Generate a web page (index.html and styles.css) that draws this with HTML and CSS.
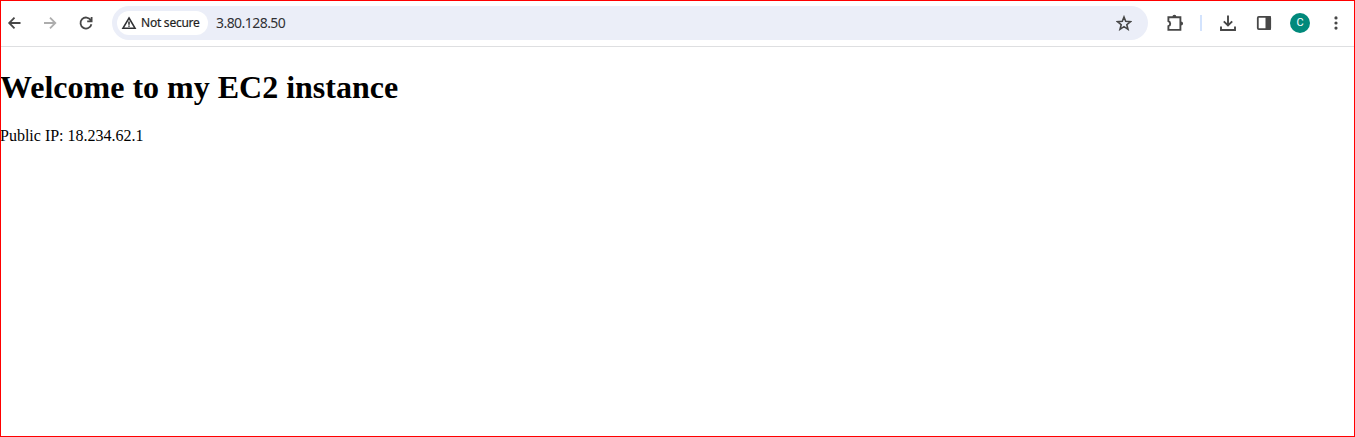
FILE: index.html
```html
<!DOCTYPE html>
<html lang="en">
<head>
<meta charset="utf-8">
<title>3.80.128.50</title>
<link rel="stylesheet" href="styles.css">
</head>
<body>
<div class="window">
  <header class="toolbar">
    <nav class="nav">
      <svg class="icon" viewBox="0 0 16 16"><path d="M14.500 8H3.500M8.500 2.700L3.200 8l5.300 5.300"/></svg>
      <svg class="icon disabled" viewBox="0 0 16 16"><path d="M2 8h11M8 2.700L13.300 8 8 13.300"/></svg>
      <svg class="icon" viewBox="0 0 16 16"><path d="M12.800 5.300A5.500 5.500 0 1 0 13.400 9.200M13.600 2v4.400H9.200"/></svg>
    </nav>
    <div class="omnibox">
      <div class="chip">
        <svg class="icon warn" viewBox="0 0 16 16"><path d="M8 3L14 13.200H2z"/><path d="M8 6.500v3.300M8 10.500v1.300"/></svg>
        <span class="chip-label">Not secure</span>
      </div>
      <span class="url">3.80.128.50</span>
      <svg class="icon star" viewBox="0 0 16 16"><path d="M8 2l1.700 4.300 4.700.400-3.600 3 1.200 4.600L8 11.700l-4 2.600 1.200-4.600-3.600-3 4.700-.400z"/></svg>
    </div>
    <div class="actions">
      <svg class="icon large" viewBox="0 0 20 20"><path d="M3.400 4.300H15.400V16.900H3.400V13.200C5.800 12.300 5.800 9 3.400 8.100z"/><path class="solid" d="M7.400 4a2 2.300 0 0 1 4 0zM15.800 8.500a2.300 2 0 0 1 0 4z"/></svg>
      <span class="divider"></span>
      <svg class="icon large download" viewBox="0 0 20 20"><path d="M10 2.500v9.500M5.800 8.300L10 12.500l4.200-4.200M3 13.500v3.500h14v-3.500"/></svg>
      <svg class="icon panel" viewBox="0 0 16 16"><rect x="1.800" y="1.900" width="12.400" height="12.200" rx="1"/><path class="solid" d="M9.500 1H14a1 1 0 0 1 1 1v12a1 1 0 0 1-1 1H9.500z"/></svg>
      <span class="avatar">C</span>
      <svg class="icon menu" viewBox="0 0 16 16"><circle cx="8" cy="2.900" r="1.600"/><circle cx="8" cy="8" r="1.600"/><circle cx="8" cy="13.100" r="1.600"/></svg>
    </div>
  </header>
  <main class="page">
    <h1 class="heading">Welcome to my EC2 instance</h1>
    <p class="address">Public IP: 18.234.62.1</p>
  </main>
</div>
</body>
</html>
```
FILE: styles.css
```css
body { margin: 0; background: #fff; }

.window {
  box-sizing: border-box;
  height: 437px;
  border: 1px solid #f00;
  overflow: hidden;
}

.toolbar {
  box-sizing: border-box;
  display: flex;
  align-items: center;
  height: 46px;
  padding: 0 10px 2px 5px;
  border-bottom: 1px solid #dedfe1;
  font-family: "Noto Sans", sans-serif;
}

.nav { display: flex; gap: 20px; margin-right: 18px; }

.icon {
  display: block;
  flex: none;
  width: 16px;
  height: 16px;
  fill: none;
  stroke: #474747;
  stroke-width: 1.8;
}

.icon.disabled { stroke: #adadad; }
.icon.large { width: 20px; height: 20px; stroke-width: 1.9; }
.icon .solid { fill: #474747; stroke: none; }

.omnibox {
  box-sizing: border-box;
  flex: 1;
  display: flex;
  align-items: center;
  height: 34px;
  padding: 0 16px 0 5px;
  border-radius: 17px;
  background: #ebeef8;
}

.chip {
  box-sizing: border-box;
  display: flex;
  align-items: center;
  gap: 4px;
  width: 91px;
  height: 24px;
  padding-left: 4px;
  border-radius: 12px;
  background: #fff;
}

.icon.warn { stroke: #303134; stroke-width: 1.6; }

.chip-label {
  color: #1f1f1f;
  font-size: 12px;
  line-height: 16px;
  letter-spacing: -0.24px;
  white-space: nowrap;
  -webkit-text-stroke: 0.2px #1f1f1f;
}

.url {
  margin-left: 8px;
  color: #303134;
  font-size: 14px;
  line-height: 20px;
  letter-spacing: -0.55px;
}

.icon.star { margin-left: auto; stroke-width: 1.6; }

.actions { display: flex; align-items: center; margin-left: 17px; }

.divider { width: 2px; height: 16px; margin: 0 16px 0 15px; background: #d3e3fd; }

.panel { margin-left: 18px; }

.avatar {
  width: 20px;
  height: 20px;
  margin: 0 18px;
  border-radius: 50%;
  background: #00897b;
  color: #fff;
  font: 11px/20px Roboto, sans-serif;
  text-align: center;
}

.icon.menu { fill: #474747; stroke: none; }

.page { font-family: "Liberation Serif", "Times New Roman", serif; color: #000; margin-left: -1px; }

.heading { margin: 22px 0 21px; font-size: 32px; line-height: 37px; }

.address { margin: 0; font-size: 16px; line-height: 18px; }
```
